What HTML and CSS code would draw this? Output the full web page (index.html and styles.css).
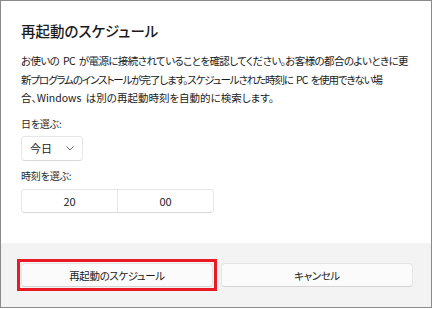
FILE: index.html
```html
<!DOCTYPE html>
<html lang="ja">
<head>
<meta charset="utf-8">
<link rel="stylesheet" href="styles.css">
</head>
<body>
<div class="dialog">
  <div class="content">
    <h1 class="title">再起動のスケジュール</h1>
    <p class="desc"><span class="l1">お使いの PC が電源に接続されていることを確認してください。お客様の都合のよいときに更</span><br><span class="l2">新プログラムのインストールが完了します。スケジュールされた時刻に PC を使用できない場</span><br><span class="l3">合、Windows は別の再起動時刻を自動的に検索します。</span></p>
    <div class="label">日を選ぶ:</div>
    <div class="dropdown">
      <span>今日</span>
      <svg class="chev" width="8" height="5" viewBox="0 0 8 5"><polyline points="0.5,0.5 4,4 7.5,0.5" fill="none" stroke="#5a5a5a" stroke-width="0.9"/></svg>
    </div>
    <div class="label label2">時刻を選ぶ:</div>
    <div class="timebox">
      <div class="cell">20</div>
      <div class="cell">00</div>
    </div>
  </div>
  <div class="footer">
    <button class="btn primary">再起動のスケジュール</button>
    <button class="btn">キャンセル</button>
  </div>
</div>
</body>
</html>
```
FILE: styles.css
```css
* { box-sizing: border-box; }
html, body { margin: 0; padding: 0; background: #ffffff; }
body {
  font-family: "Noto Sans CJK JP", "Noto Sans", sans-serif;
  font-feature-settings: "palt";
  color: #1b1b1b;
}
.dialog {
  width: 432px;
  height: 308px;
  border: 1px solid #8a8a8a;
  display: flex;
  flex-direction: column;
  background: #ffffff;
}
.content {
  flex: 1;
  padding: 19px 20px 0 20px;
}
.title {
  margin: 0;
  font-size: 14.5px;
  font-weight: 500;
  line-height: 22px;
}
.desc {
  margin: 10px 0 0 0;
  font-size: 10.5px;
  letter-spacing: -0.35px;
  word-spacing: 2px;
  line-height: 18.5px;
  white-space: nowrap;
}
.l1 { letter-spacing: -0.6px; }
.l2 { letter-spacing: -1.1px; }
.l3 { letter-spacing: 0px; }
.label {
  margin-top: 8px;
  font-size: 10px;
  letter-spacing: -0.2px;
  line-height: 16px;
  color: #2a2a2a;
}
.label2 { margin-top: 7px; }
.dropdown {
  margin-top: 4px;
  width: 62px;
  height: 25px;
  border: 1px solid #e6e6e6;
  border-bottom-color: #d8d8d8;
  border-radius: 4px;
  display: flex;
  align-items: center;
  padding-left: 8px;
  font-size: 11px;
  background: #ffffff;
}
.chev { margin-left: 14px; }
.timebox {
  margin-top: 5px;
  width: 193px;
  height: 24px;
  border: 1px solid #e6e6e6;
  border-bottom-color: #d8d8d8;
  border-radius: 4px;
  display: flex;
  font-size: 11px;
}
.cell {
  flex: 1;
  display: flex;
  align-items: center;
  justify-content: center;
}
.cell + .cell { border-left: 1px solid #e6e6e6; }
.footer {
  height: 64px;
  background: #f3f3f3;
  display: flex;
  gap: 8px;
  padding: 20px 18px 20px 20px;
}
.btn {
  flex: 1;
  height: 24px;
  border: 1px solid #e5e5e5;
  border-bottom-color: #d4d4d4;
  border-radius: 4px;
  background: #fbfbfb;
  font-family: inherit;
  font-feature-settings: "palt";
  font-size: 10.5px;
  letter-spacing: -0.4px;
  color: #1b1b1b;
  padding: 0;
}
.primary {
  position: relative;
}
.primary::after {
  content: "";
  position: absolute;
  left: -5px;
  right: -5px;
  top: -5px;
  bottom: -5px;
  border: 3px solid #e81a24;
}
```
